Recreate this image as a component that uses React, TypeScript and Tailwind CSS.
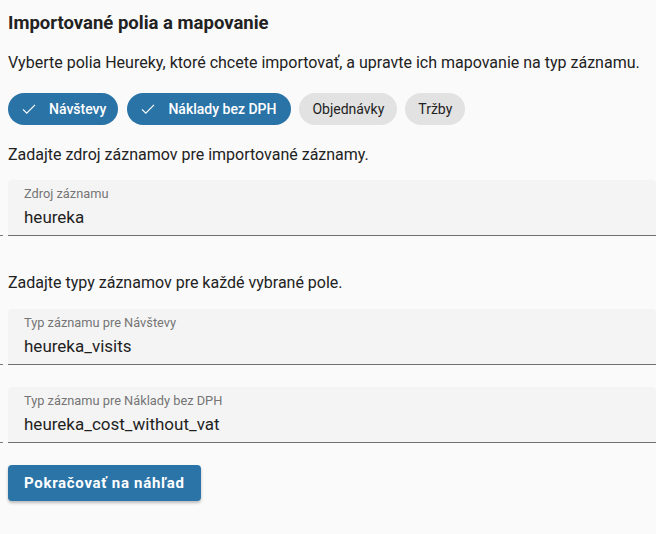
import React from "react";

type Chip = { label: string; selected: boolean };

const chips: Chip[] = [
  { label: "Návštevy", selected: true },
  { label: "Náklady bez DPH", selected: true },
  { label: "Objednávky", selected: false },
  { label: "Tržby", selected: false },
];

const CheckIcon = () => (
  <svg width="18" height="18" viewBox="0 0 24 24" fill="none" stroke="currentColor" strokeWidth="1.6">
    <path d="M4 12.5l5 5L20 6.5" />
  </svg>
);

const Field = ({ label, value }: { label: string; value: string }) => (
  <div className="flex items-end">
    <div className="w-[3px] h-px bg-[#7a7a7a] -ml-2 mr-[5px]" />
    <div className="flex-1 h-14 bg-[#f4f4f4] rounded-t border-b border-[#6f6f6f] px-4 pt-[6px]">
      <div className="text-[12.8px] leading-4 text-[#757575]">{label}</div>
      <div className="text-[17px] leading-6 text-[#1f1f1f] mt-[3px]">{value}</div>
    </div>
  </div>
);

export default function App() {
  return (
    <div
      className="w-[656px] h-[534px] bg-[#fafafa] pl-2 pt-[9px] text-[#222]"
      style={{ fontFamily: "Roboto, 'Noto Sans', sans-serif" }}
    >
      <h2 className="text-[18.5px] leading-7 font-bold text-[#222]">Importované polia a mapovanie</h2>
      <p className="mt-[14px] text-base leading-6">
        Vyberte polia Heureky, ktoré chcete importovať, a upravte ich mapovanie na typ záznamu.
      </p>
      <div className="mt-[18px] flex gap-2">
        {chips.map((c, i) =>
          c.selected ? (
            <div
              key={c.label}
              className={`h-8 rounded-full bg-[#2a73a7] text-white flex items-center gap-[11px] text-sm font-medium ${
                i === 1 ? "ml-px pl-3 pr-[15px]" : "px-3"
              }`}
            >
              <CheckIcon />
              <span>{c.label}</span>
            </div>
          ) : (
            <div
              key={c.label}
              className="h-8 rounded-full bg-[#e2e2e2] text-[#222] flex items-center px-[13px] text-sm"
            >
              {c.label}
            </div>
          )
        )}
      </div>
      <p className="mt-[18px] text-base leading-6">Zadajte zdroj záznamov pre importované záznamy.</p>
      <div className="mt-[13px]">
        <Field label="Zdroj záznamu" value="heureka" />
      </div>
      <p className="mt-[35px] text-base leading-6">Zadajte typy záznamov pre každé vybrané pole.</p>
      <div className="mt-[14px] flex flex-col gap-[22px]">
        <Field label="Typ záznamu pre Návštevy" value="heureka_visits" />
        <Field label="Typ záznamu pre Náklady bez DPH" value="heureka_cost_without_vat" />
      </div>
      <button className="mt-[22px] h-9 px-4 rounded bg-[#2a74a8] text-white text-[15px] font-bold tracking-[0.7px] shadow-[0_2px_3px_rgba(0,0,0,0.25)]">
        Pokračovať na náhľad
      </button>
    </div>
  );
}
